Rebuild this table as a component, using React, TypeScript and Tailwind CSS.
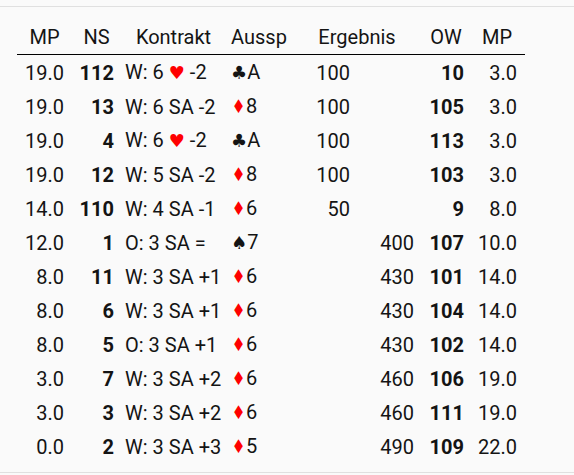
import React from "react";

type Row = {
  mpNs: string;
  ns: string;
  contract: React.ReactNode;
  lead: React.ReactNode;
  scoreNs: string;
  scoreEw: string;
  ew: string;
  mpEw: string;
};

const Heart = () => <span className="text-[18px] text-[#ff0000]">♥</span>;
const Diamond = () => (
  <span className="inline-block scale-x-[0.8] text-[19px] text-[#ff0000] -mx-px">♦</span>
);
const Black = ({ s }: { s: string }) => <span className="text-[18px]">{s}</span>;

const rows: Row[] = [
  { mpNs: "19.0", ns: "112", contract: <>W: 6 <Heart /> -2</>, lead: <><Black s="♣" />A</>, scoreNs: "100", scoreEw: "", ew: "10", mpEw: "3.0" },
  { mpNs: "19.0", ns: "13", contract: "W: 6 SA -2", lead: <><Diamond />8</>, scoreNs: "100", scoreEw: "", ew: "105", mpEw: "3.0" },
  { mpNs: "19.0", ns: "4", contract: <>W: 6 <Heart /> -2</>, lead: <><Black s="♣" />A</>, scoreNs: "100", scoreEw: "", ew: "113", mpEw: "3.0" },
  { mpNs: "19.0", ns: "12", contract: "W: 5 SA -2", lead: <><Diamond />8</>, scoreNs: "100", scoreEw: "", ew: "103", mpEw: "3.0" },
  { mpNs: "14.0", ns: "110", contract: "W: 4 SA -1", lead: <><Diamond />6</>, scoreNs: "50", scoreEw: "", ew: "9", mpEw: "8.0" },
  { mpNs: "12.0", ns: "1", contract: "O: 3 SA =", lead: <><Black s="♠" />7</>, scoreNs: "", scoreEw: "400", ew: "107", mpEw: "10.0" },
  { mpNs: "8.0", ns: "11", contract: "W: 3 SA +1", lead: <><Diamond />6</>, scoreNs: "", scoreEw: "430", ew: "101", mpEw: "14.0" },
  { mpNs: "8.0", ns: "6", contract: "W: 3 SA +1", lead: <><Diamond />6</>, scoreNs: "", scoreEw: "430", ew: "104", mpEw: "14.0" },
  { mpNs: "8.0", ns: "5", contract: "O: 3 SA +1", lead: <><Diamond />6</>, scoreNs: "", scoreEw: "430", ew: "102", mpEw: "14.0" },
  { mpNs: "3.0", ns: "7", contract: "W: 3 SA +2", lead: <><Diamond />6</>, scoreNs: "", scoreEw: "460", ew: "106", mpEw: "19.0" },
  { mpNs: "3.0", ns: "3", contract: "W: 3 SA +2", lead: <><Diamond />6</>, scoreNs: "", scoreEw: "460", ew: "111", mpEw: "19.0" },
  { mpNs: "0.0", ns: "2", contract: "W: 3 SA +3", lead: <><Diamond />5</>, scoreNs: "", scoreEw: "490", ew: "109", mpEw: "22.0" },
];

// column tracks, from x=17 to x=525
const grid = "grid grid-cols-[54px_48px_108px_66px_64px_64px_49px_55px] h-[34px] items-center leading-[34px]";

export default function App() {
  return (
    <div className="min-h-screen bg-[#fafafa] pt-[6px] text-[20px] text-[#141414] font-['Roboto','DejaVu_Sans',sans-serif]">
      <div className="border-y border-[#e0e0e0] pt-[13px] pb-[9px] pl-[17px]">
        <div className="w-[508px]">
          <div className={grid + " box-content border-b border-black"}>
            <div className="pl-[8px] pr-[7px] text-center">MP</div>
            <div className="pl-[8px] pr-[5px] text-center">NS</div>
            <div className="pl-[6px] pr-[5px] text-center whitespace-nowrap">Kontrakt</div>
            <div className="pl-[4px] pr-[6px] text-center">Aussp</div>
            <div className="col-span-2 text-center">Ergebnis</div>
            <div className="pl-[7px] pr-[6px] text-center">OW</div>
            <div className="pl-[7px] pr-[8px] text-center">MP</div>
          </div>
          {rows.map((r, i) => (
            <div key={i} className={grid}>
              <div className="pl-[8px] pr-[7px] text-right">{r.mpNs}</div>
              <div className="pl-[8px] pr-[5px] text-right font-bold">{r.ns}</div>
              <div className="pl-[6px] pr-[5px] text-left whitespace-nowrap">{r.contract}</div>
              <div className="pl-[4px] pr-[6px] text-left whitespace-nowrap">{r.lead}</div>
              <div className="pr-[7px] text-right">{r.scoreNs}</div>
              <div className="pr-[7px] text-right">{r.scoreEw}</div>
              <div className="pl-[7px] pr-[6px] text-right font-bold">{r.ew}</div>
              <div className="pl-[7px] pr-[8px] text-right">{r.mpEw}</div>
            </div>
          ))}
        </div>
      </div>
    </div>
  );
}
